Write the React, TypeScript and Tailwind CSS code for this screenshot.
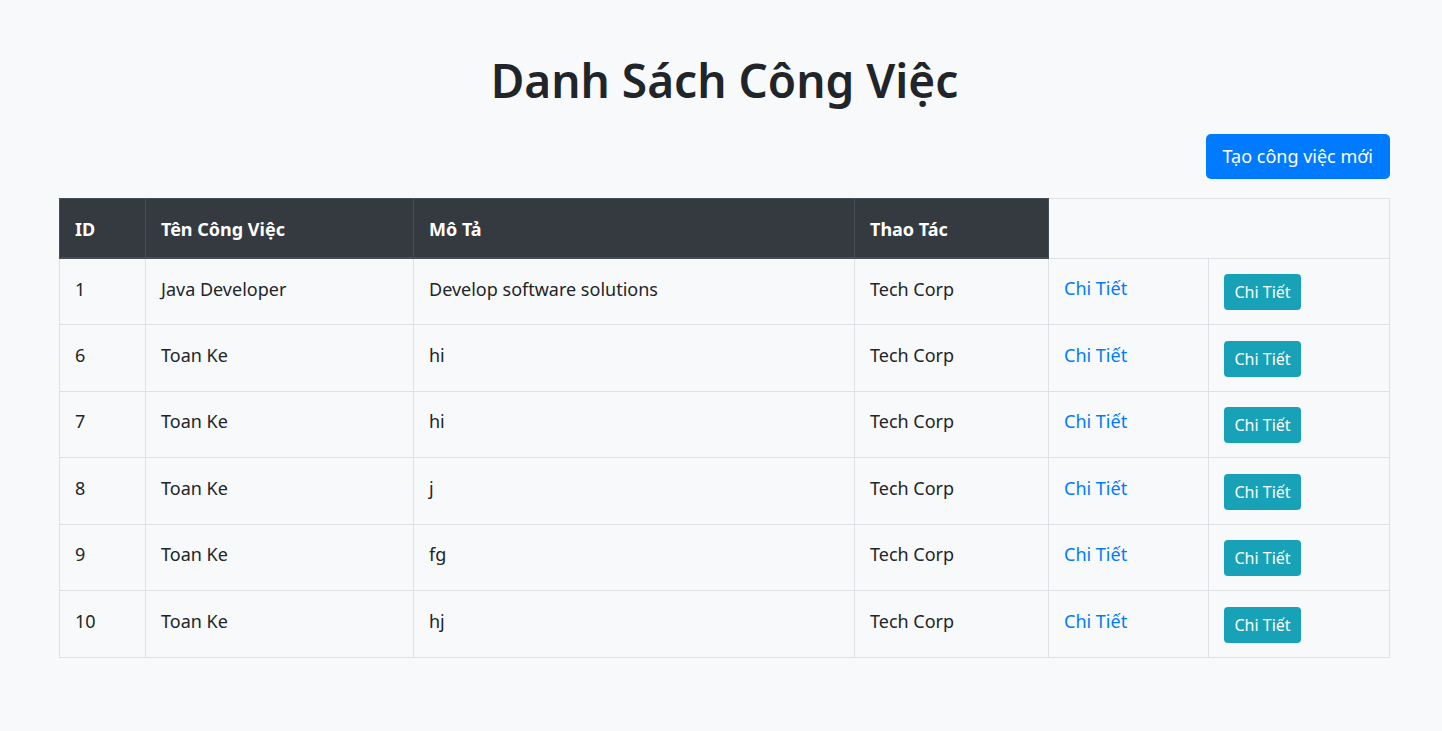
import React from "react";

type Job = {
  id: number;
  name: string;
  desc: string;
  company: string;
};

const jobs: Job[] = [
  { id: 1, name: "Java Developer", desc: "Develop software solutions", company: "Tech Corp" },
  { id: 6, name: "Toan Ke", desc: "hi", company: "Tech Corp" },
  { id: 7, name: "Toan Ke", desc: "hi", company: "Tech Corp" },
  { id: 8, name: "Toan Ke", desc: "j", company: "Tech Corp" },
  { id: 9, name: "Toan Ke", desc: "fg", company: "Tech Corp" },
  { id: 10, name: "Toan Ke", desc: "hj", company: "Tech Corp" },
];

const th =
  "bg-[#343a40] text-white font-bold text-left px-[15px] pt-[17px] pb-[14px] border border-[#454d55] border-b-2 leading-[27px]";
const td = "align-top px-[15px] pt-[16.75px] pb-[12.75px] border border-[#dee2e6] leading-[27px]";

const App = () => {
  return (
    <div className="min-h-screen bg-[#f8f9fa] pl-[59px] pr-[52px] pt-[51px] text-[#212529] text-[18px] font-['Noto_Sans',sans-serif]">
      <h1 className="text-center text-[46px] font-semibold leading-[58px]">
        Danh Sách Công Việc
      </h1>
      <div className="flex justify-end mt-[25px] mb-[19px]">
        <button className="h-[45px] px-[17px] rounded-[5px] bg-[#007bff] text-white text-[18px]">
          Tạo công việc mới
        </button>
      </div>
      <table className="w-full table-fixed border-collapse border border-[#dee2e6]">
        <colgroup>
          <col className="w-[86px]" />
          <col className="w-[268px]" />
          <col className="w-[441px]" />
          <col className="w-[194px]" />
          <col className="w-[160px]" />
          <col />
        </colgroup>
        <thead>
          <tr>
            <th className={th}>ID</th>
            <th className={th}>Tên Công Việc</th>
            <th className={th}>Mô Tả</th>
            <th className={th}>Thao Tác</th>
          </tr>
        </thead>
        <tbody>
          {jobs.map((job) => (
            <tr key={job.id}>
              <td className={td}>{job.id}</td>
              <td className={td}>{job.name}</td>
              <td className={td}>{job.desc}</td>
              <td className={td}>{job.company}</td>
              <td className={td}>
                <a href="#" className="text-[#007bff]">
                  Chi Tiết
                </a>
              </td>
              <td className="align-top px-[15px] pt-[15.75px] pb-[13.75px] border border-[#dee2e6]">
                <button className="block h-9 px-[10.5px] rounded-[4px] bg-[#17a2b8] text-white text-[16px] leading-6">
                  Chi Tiết
                </button>
              </td>
            </tr>
          ))}
        </tbody>
      </table>
    </div>
  );
};

export default App;
